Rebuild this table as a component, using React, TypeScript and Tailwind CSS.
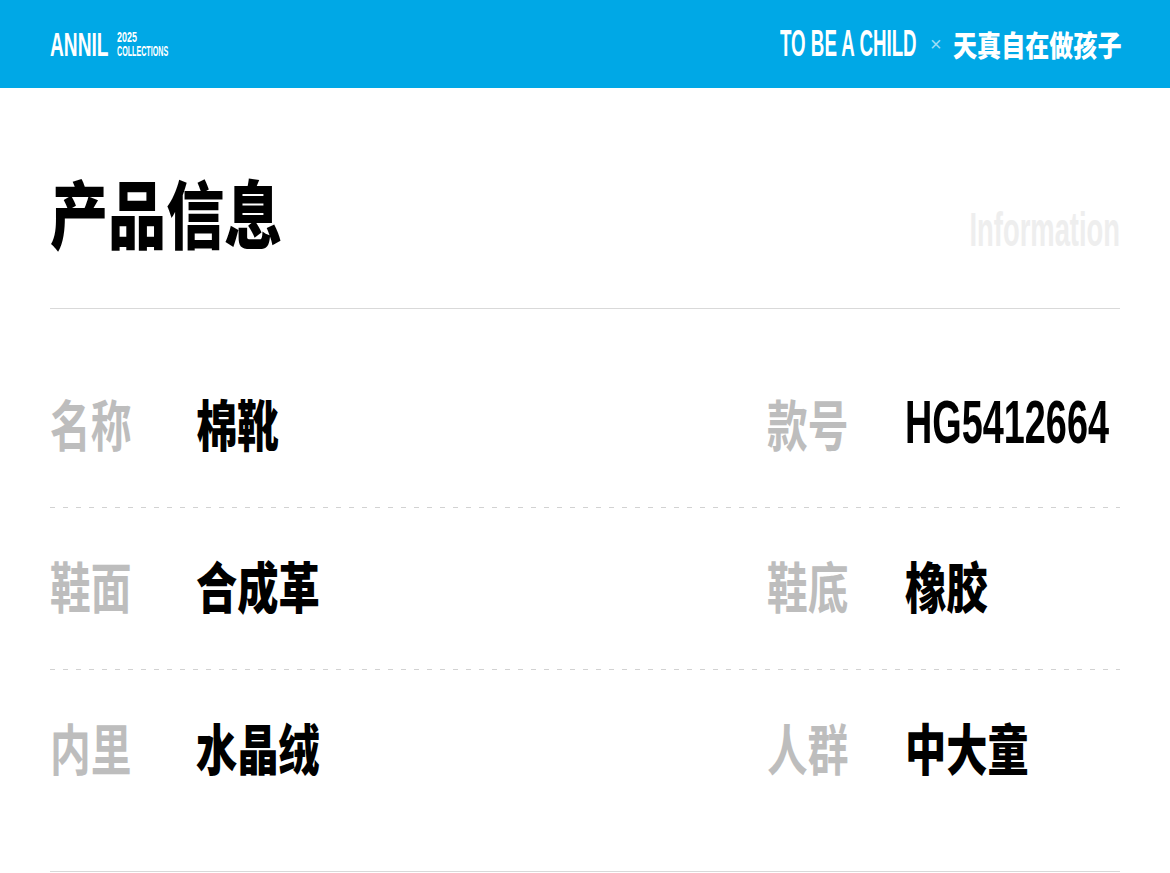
import React from "react";

const latin = "font-['Liberation_Sans',Arial,sans-serif] font-bold";
const cjk = "font-['Noto_Sans_CJK_SC','Noto_Sans',sans-serif]";

type Row = { l1: string; v1: string; l2: string; v2: string; latin2?: boolean };

const rows: Row[] = [
  { l1: "名称", v1: "棉靴", l2: "款号", v2: "HG5412664", latin2: true },
  { l1: "鞋面", v1: "合成革", l2: "鞋底", v2: "橡胶" },
  { l1: "内里", v1: "水晶绒", l2: "人群", v2: "中大童" },
];

function Label({ text }: { text: string }) {
  return (
    <span className={`block origin-left scale-x-[0.74] whitespace-nowrap text-[55px] leading-none font-bold text-[#bdbdbd] ${cjk}`}>
      {text}
    </span>
  );
}

function Value({ text, isLatin }: { text: string; isLatin?: boolean }) {
  if (isLatin) {
    return (
      <span className={`block origin-left scale-x-[0.61] whitespace-nowrap text-[62px] leading-none text-black ${latin}`}>
        {text}
      </span>
    );
  }
  return (
    <span className={`block origin-left scale-x-[0.75] whitespace-nowrap text-[55px] leading-none font-black text-black ${cjk}`}>
      {text}
    </span>
  );
}

function Dashed() {
  return (
    <div className="h-px w-full bg-[repeating-linear-gradient(to_right,#d2d2d2_0px,#d2d2d2_5px,transparent_5px,transparent_13px)]" />
  );
}

export default function App() {
  return (
    <div className="w-[1170px] h-[873px] bg-white overflow-hidden">
      <header className="h-[88px] bg-[#00a8e6] flex items-center justify-between px-[50px] text-white">
        <div className="flex items-center">
          <div className="w-[59px] h-[33px] shrink-0">
            <span className={`block origin-left scale-x-[0.58] whitespace-nowrap text-[33px] leading-none ${latin}`}>
              ANNIL
            </span>
          </div>
          <div className="ml-[8px] flex flex-col w-[52px] shrink-0">
            <span className={`block origin-left scale-x-[0.64] whitespace-nowrap text-[14px] leading-none ${latin}`}>
              2025
            </span>
            <span className={`block origin-left scale-x-[0.51] whitespace-nowrap text-[14px] leading-none ${latin}`}>
              COLLECTIONS
            </span>
          </div>
        </div>
        <div className="flex items-center">
          <div className="w-[138px] h-[36px] shrink-0">
            <span className={`block origin-left scale-x-[0.52] whitespace-nowrap text-[36px] leading-none ${latin}`}>
              TO BE A CHILD
            </span>
          </div>
          <span className={`ml-[12px] w-[12px] shrink-0 text-[20px] leading-none text-[#9fdcf5] ${latin} font-normal`}>×</span>
          <div className="ml-[11px] w-[167px] h-[29px] shrink-0">
            <span className={`block origin-left scale-x-[0.83] whitespace-nowrap text-[29px] leading-none font-black ${cjk}`}>
              天真自在做孩子
            </span>
          </div>
        </div>
      </header>

      <main className="px-[50px]">
        <section className="h-[220px] pt-[86px] flex items-start justify-between">
          <div className="w-[232px] h-[74px] shrink-0">
            <h1 className={`block origin-left scale-x-[0.785] whitespace-nowrap text-[74px] leading-none font-black text-black ${cjk}`}>
              产品信息
            </h1>
          </div>
          <div className="mt-[32px] w-[150px] h-[48px] flex justify-end shrink-0">
            <span className={`block origin-right scale-x-[0.57] whitespace-nowrap text-[48px] leading-none text-[#eeeeee] ${latin}`}>
              Information
            </span>
          </div>
        </section>
        <div className="h-px w-full bg-[#d9d9d9]" />

        <div className="pt-[37px]">
          {rows.map((r, i) => (
            <React.Fragment key={i}>
              {i > 0 && <Dashed />}
              <div className="h-[161px] flex items-center pb-[9px]">
                <div className="w-[146px] shrink-0">
                  <Label text={r.l1} />
                </div>
                <div className="w-[571px] shrink-0">
                  <Value text={r.v1} />
                </div>
                <div className="w-[138px] shrink-0">
                  <Label text={r.l2} />
                </div>
                <div className="flex-1 min-w-0">
                  <Value text={r.v2} isLatin={r.latin2} />
                </div>
              </div>
            </React.Fragment>
          ))}
        </div>
        <div className="mt-[40px] h-px w-full bg-[#d9d9d9]" />
      </main>
    </div>
  );
}
